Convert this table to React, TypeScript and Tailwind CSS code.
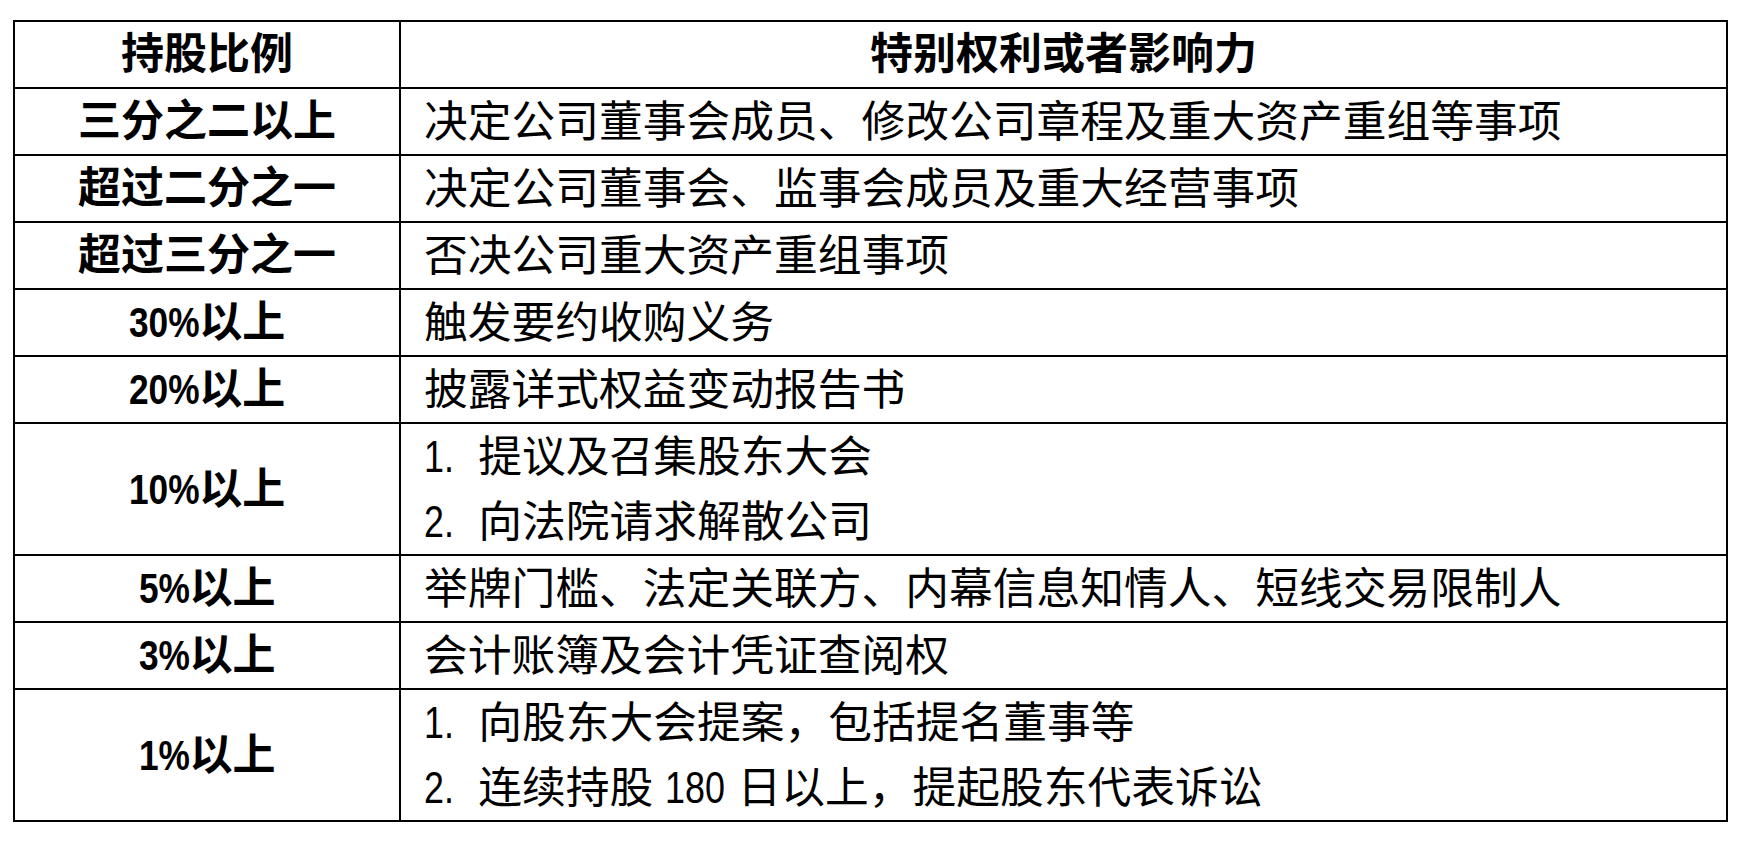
import type { ReactNode } from "react";

// Arial Narrow look-alike: Liberation Sans squeezed, with margin pulling back the lost width
const Narrow = ({ children, mr }: { children: string; mr: string }) => (
  <span className={`inline-block origin-left scale-x-[0.82] ${mr}`}>{children}</span>
);

const rows: { pct: ReactNode; lines: ReactNode[] }[] = [
  { pct: "三分之二以上", lines: ["决定公司董事会成员、修改公司章程及重大资产重组等事项"] },
  { pct: "超过二分之一", lines: ["决定公司董事会、监事会成员及重大经营事项"] },
  { pct: "超过三分之一", lines: ["否决公司重大资产重组事项"] },
  { pct: <><Narrow mr="mr-[-0.36em]">30%</Narrow>以上</>, lines: ["触发要约收购义务"] },
  { pct: <><Narrow mr="mr-[-0.36em]">20%</Narrow>以上</>, lines: ["披露详式权益变动报告书"] },
  {
    pct: <><Narrow mr="mr-[-0.36em]">10%</Narrow>以上</>,
    lines: [
      <><Narrow mr="mr-[-0.15em]">1.</Narrow>{"  "}提议及召集股东大会</>,
      <><Narrow mr="mr-[-0.15em]">2.</Narrow>{"  "}向法院请求解散公司</>,
    ],
  },
  { pct: <><Narrow mr="mr-[-0.26em]">5%</Narrow>以上</>, lines: ["举牌门槛、法定关联方、内幕信息知情人、短线交易限制人"] },
  { pct: <><Narrow mr="mr-[-0.26em]">3%</Narrow>以上</>, lines: ["会计账簿及会计凭证查阅权"] },
  {
    pct: <><Narrow mr="mr-[-0.26em]">1%</Narrow>以上</>,
    lines: [
      <><Narrow mr="mr-[-0.15em]">1.</Narrow>{"  "}向股东大会提案，包括提名董事等</>,
      <><Narrow mr="mr-[-0.15em]">2.</Narrow>{"  "}连续持股 <Narrow mr="mr-[-0.3em]">180</Narrow> 日以上，提起股东代表诉讼</>,
    ],
  },
];

export default function App() {
  return (
    <div className="min-h-screen bg-white pt-[20px] pl-[13px] text-black font-['Liberation_Sans','Noto_Sans_CJK_SC',sans-serif]">
      <table className="w-[1715px] border-collapse border-2 border-black text-[43px] leading-[65px]">
        <thead>
          <tr>
            <th className="w-[386px] border-2 border-black text-center font-bold">持股比例</th>
            <th className="border-2 border-black text-center font-bold">特别权利或者影响力</th>
          </tr>
        </thead>
        <tbody>
          {rows.map((r, i) => (
            <tr key={i}>
              <td className="border-2 border-black text-center font-bold">{r.pct}</td>
              <td className="border-2 border-black pl-[23px] text-[43.75px] whitespace-pre">
                {r.lines.map((l, j) => (
                  <div key={j}>{l}</div>
                ))}
              </td>
            </tr>
          ))}
        </tbody>
      </table>
    </div>
  );
}
